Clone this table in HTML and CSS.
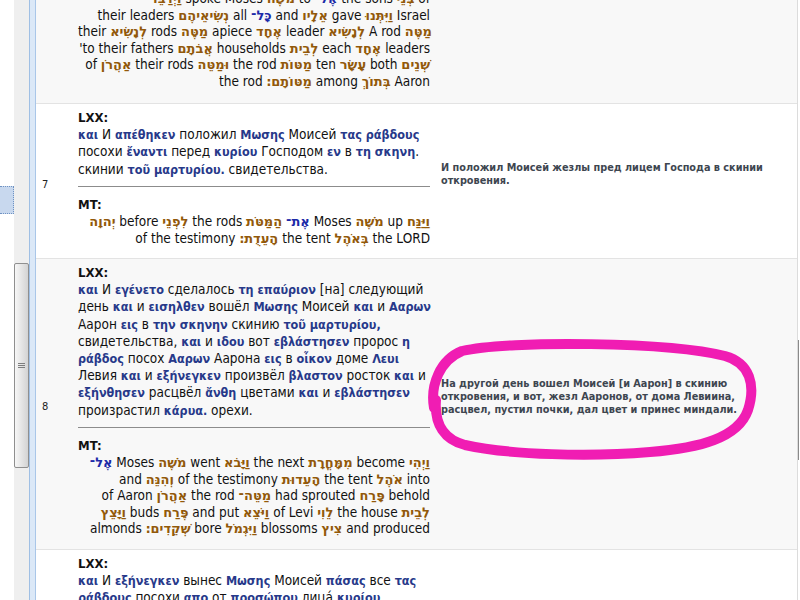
FILE: index.html
```html
<!DOCTYPE html>
<html lang="ru">
<head>
    <meta charset="UTF-8">
    <title>Числа 17 — LXX / MT</title>
    <link rel="stylesheet" href="styles.css">
</head>
<body>
    <div class="window">
        <div class="nav">
            <div class="nav-sel"></div>
        </div>
        <div class="vscroll">
            <div class="thumb"><span class="grip"></span></div>
        </div>
        <div class="divider"></div>

        <div class="verses">
            <!-- verse 6, scrolled partly out of view -->
            <div class="row alt first">
                <div class="num"></div>
                <div class="text">
                    <div class="mt">
                        <div class="ln"><span class="h">וַיְדַבֵּר</span> spoke Moses <span class="h">מֹשֶׁה</span> to <span class="hb">אֶל־</span> the sons <span class="h">בְּנֵי</span> of</div>
                        <div class="ln">their leaders <span class="h">נְשִׂיאֵיהֶם</span> all <span class="hb">כָּל־</span> and <span class="h">אֵלָיו</span> gave <span class="h">וַיִּתְּנוּ</span> Israel</div>
                        <div class="ln">their <span class="h">לְנָשִׂיא</span> rods <span class="h">מַטֶּה</span> apiece <span class="h">אֶחָד</span> leader <span class="h">לְנָשִׂיא</span> A rod <span class="h">מַטֶּה</span></div>
                        <div class="ln">'to their fathers <span class="h">אֲבֹתָם</span> households <span class="h">לְבֵית</span> each <span class="h">אֶחָד</span> leaders</div>
                        <div class="ln">of <span class="h">אַהֲרֹן</span> their rods <span class="h">וּמַטֵּה</span> the rod <span class="h">מַטּוֹת</span> ten <span class="h">עָשָׂר</span> both <span class="h">שְׁנֵים</span></div>
                        <div class="ln">the rod <span class="h">מַטּוֹתָם׃</span> among <span class="h">בְּתוֹךְ</span> Aaron</div>
                    </div>
                </div>
                <div class="trans"></div>
            </div>

            <!-- verse 7 -->
            <div class="row">
                <div class="num">7</div>
                <div class="text">
                    <div class="lbl">LXX:</div>
                    <div class="ln"><span class="g">και</span> И <span class="g">απέθηκεν</span> положил <span class="g">Μωσης</span> Моисей <span class="g">τας ράβδους</span></div>
                    <div class="ln">посохи <span class="g">ἔναντι</span> перед <span class="g">κυρίου</span> Господом <span class="g">εν</span> в <span class="g">τη σκηνη</span>.</div>
                    <div class="ln">скинии <span class="g">τοῦ μαρτυρίου.</span> свидетельства.</div>
                    <div class="sep"></div>
                    <div class="lbl">MT:</div>
                    <div class="mt">
                        <div class="ln"><span class="h">יְהוָה</span> before <span class="h">לִפְנֵי</span> the rods <span class="h">הַמַּטֹּת</span> <span class="hb">אֶת־</span> Moses <span class="h">מֹשֶׁה</span> up <span class="h">וַיַּנַּח</span></div>
                        <div class="ln">of the testimony <span class="h">הָעֵדֻת׃</span> the tent <span class="h">בְּאֹהֶל</span> the LORD</div>
                    </div>
                </div>
                <div class="trans">И положил Моисей жезлы пред лицем Господа в скинии<br>откровения.</div>
            </div>

            <!-- verse 8 -->
            <div class="row alt">
                <div class="num">8</div>
                <div class="text">
                    <div class="lbl">LXX:</div>
                    <div class="ln"><span class="g">και</span> И <span class="g">εγένετο</span> сделалось <span class="g">τη επαύριον</span> [на] следующий</div>
                    <div class="ln">день <span class="g">και</span> и <span class="g">εισηλθεν</span> вошёл <span class="g">Μωσης</span> Моисей <span class="g">και</span> и <span class="g">Ααρων</span></div>
                    <div class="ln">Аарон <span class="g">εις</span> в <span class="g">την σκηνην</span> скинию <span class="g">τοῦ μαρτυρίου,</span></div>
                    <div class="ln">свидетельства, <span class="g">και</span> и <span class="g">ιδου</span> вот <span class="g">εβλάστησεν</span> пророс <span class="g">η</span></div>
                    <div class="ln"><span class="g">ράβδος</span> посох <span class="g">Ααρων</span> Аарона <span class="g">εις</span> в <span class="g">οἶκον</span> доме <span class="g">Λευι</span></div>
                    <div class="ln">Левия <span class="g">και</span> и <span class="g">εξήνεγκεν</span> произвёл <span class="g">βλαστον</span> росток <span class="g">και</span> и</div>
                    <div class="ln"><span class="g">εξήνθησεν</span> расцвёл <span class="g">ἄνθη</span> цветами <span class="g">και</span> и <span class="g">εβλάστησεν</span></div>
                    <div class="ln">произрастил <span class="g">κάρυα.</span> орехи.</div>
                    <div class="sep"></div>
                    <div class="lbl">MT:</div>
                    <div class="mt">
                        <div class="ln"><span class="hb">אֶל־</span> Moses <span class="h">מֹשֶׁה</span> went <span class="h">וַיָּבֹא</span> the next <span class="h">מִמָּחֳרָת</span> become <span class="h">וַיְהִי</span></div>
                        <div class="ln">and <span class="h">וְהִנֵּה</span> of the testimony <span class="h">הָעֵדוּת</span> the tent <span class="h">אֹהֶל</span> into</div>
                        <div class="ln">of Aaron <span class="h">אַהֲרֹן</span> the rod <span class="h">מַטֵּה־</span> had sprouted <span class="h">פָּרַח</span> behold</div>
                        <div class="ln"><span class="h">וַיָּצֵץ</span> buds <span class="h">פֶּרַח</span> and put <span class="h">וַיֹּצֵא</span> of Levi <span class="h">לֵוִי</span> the house <span class="h">לְבֵית</span></div>
                        <div class="ln">almonds <span class="h">שְׁקֵדִים׃</span> bore <span class="h">וַיִּגְמֹל</span> blossoms <span class="h">צִיץ</span> and produced</div>
                    </div>
                </div>
                <div class="trans">На другой день вошел Моисей [и Аарон] в скинию<br>откровения, и вот, жезл Ааронов, от дома Левиина,<br>расцвел, пустил почки, дал цвет и принес миндали.</div>
            </div>

            <!-- verse 9 -->
            <div class="row">
                <div class="num"></div>
                <div class="text">
                    <div class="lbl">LXX:</div>
                    <div class="ln"><span class="g">και</span> И <span class="g">εξήνεγκεν</span> вынес <span class="g">Μωσης</span> Моисей <span class="g">πάσας</span> все <span class="g">τας</span></div>
                    <div class="ln"><span class="g">ράβδους</span> посохи <span class="g">απο</span> от <span class="g">προσώπου</span> лицá <span class="g">κυρίου</span></div>
                    <div class="ln">Господа</div>
                </div>
                <div class="trans"></div>
            </div>
        </div>

        <div class="edge"><div class="edge-mark"></div></div>

        <!-- hand-drawn highlight over verse 8 -->
        <svg class="mark" width="350" height="145" viewBox="0 0 350 145">
            <path d="M14 78 C10 55, 20 30, 42 21 C90 10, 250 12, 305 26 C330 33, 336 55, 328 80 C318 108, 280 118, 230 122 C170 127, 90 125, 45 115 C25 110, 14 95, 16 70" fill="none" stroke="#f01db3" stroke-width="10" stroke-linecap="round" stroke-linejoin="round"/>
        </svg>
    </div>
</body>
</html>
```

FILE: styles.css
```css
body {
    margin: 0;
    font-family: "DejaVu Sans Condensed", "DejaVu Sans", sans-serif;
    font-size: 13.5px;
    color: #111;
    background: #fff;
}
.window {
    position: relative;
    display: flex;
    height: 600px;
    overflow: hidden;
}

/* left pane remains */
.nav {
    width: 14px;
    padding-top: 186px;
    background: #fff;
}
.nav-sel {
    height: 26px;
    background: #c8d8ee;
    border: 1px dotted #6f92c2;
    border-left: none;
}
.vscroll {
    width: 15px;
    padding-top: 263px;
    background: #efefef;
}
.thumb {
    height: 203px;
    border: 1px solid #8f8f8f;
    border-radius: 2px;
    background: linear-gradient(to right, #f7f7f7, #d3d3d3);
    display: flex;
    align-items: center;
    justify-content: center;
}
.grip {
    width: 7px;
    height: 5px;
    background: repeating-linear-gradient(to bottom, #7d7d7d 0, #7d7d7d 1px, transparent 1px, transparent 2px);
}
.divider {
    width: 5px;
    background: #dbe8f7;
    border-left: 1px solid #9fbfe4;
    border-right: 1px solid #a9c6e8;
}
.edge {
    width: 2px;
    border-left: 1px solid #dcdcdc;
}
.edge-mark {
    margin-top: 340px;
    height: 120px;
    width: 1px;
    background: #8a8a8a;
}

/* verse table */
.verses {
    flex: 1;
    overflow: hidden;
}
.row {
    display: grid;
    grid-template-columns: 42px 352px 1fr;
    border-bottom: 1px solid #e3e3e3;
    background: #fff;
}
.row.alt {
    background: #f8f8f8;
}
.row.first .text {
    margin-top: -10px;
    padding: 0 0 14px;
}
.num {
    align-self: center;
    padding: 6px 0 0 6px;
    font-size: 11px;
    color: #222;
}
.text {
    padding: 5px 0 12px;
}
.lbl, .ln {
    line-height: 17.2px;
    white-space: nowrap;
}
.lbl {
    font-weight: bold;
    font-size: 13px;
}
.mt .ln {
    line-height: 16.5px;
    text-align: right;
}
.sep {
    height: 1px;
    margin: 8px 0 9px;
    background: #8c8c8c;
}
.g {
    font-weight: bold;
    font-size: 12.5px;
    line-height: 1;
    color: #27398a;
}
.h, .hb {
    font-family: "DejaVu Sans", sans-serif;
    font-weight: bold;
    font-size: 13px;
    line-height: 1;
    direction: rtl;
    unicode-bidi: isolate;
    color: #92590a;
}
.hb {
    color: #1c2aa8;
}
.trans {
    align-self: center;
    padding: 0 6px 14px 11px;
    font-weight: bold;
    font-size: 10.8px;
    line-height: 13px;
    color: #3e4650;
    white-space: nowrap;
}

/* annotation drawn over the page */
.mark {
    position: absolute;
    left: 420px;
    top: 330px;
}
```
